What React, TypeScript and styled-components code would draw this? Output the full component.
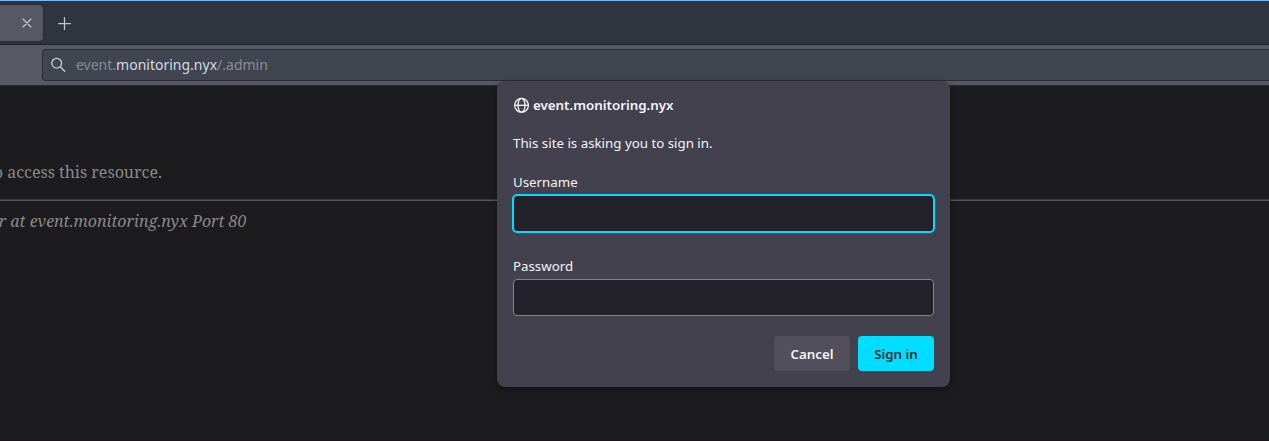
import React from "react";
import styled, { createGlobalStyle } from "styled-components";

const GlobalStyle = createGlobalStyle`
  * { box-sizing: border-box; }
  body { margin: 0; background: #1c1b1d; font-family: "Noto Sans", sans-serif; overflow: hidden; }
  button, input { font-family: inherit; }
`;

const Browser = styled.div`
  position: relative;
  width: 100%;
  height: 441px;
  overflow: hidden;
  display: flex;
  flex-direction: column;
`;

const TabBar = styled.div`
  flex: none;
  height: 45px;
  border-top: 1px solid #73bbf3;
  border-bottom: 1px solid #23252e;
  background: #30343f;
  display: flex;
  align-items: flex-start;
  padding-top: 4px;
`;

const Tab = styled.div`
  width: 43px;
  height: 36px;
  border-radius: 0 4px 4px 0;
  background: #565863;
  box-shadow: 0 0 2px rgba(15, 16, 22, 0.6);
  display: flex;
  align-items: center;
  justify-content: flex-end;
  padding-right: 11px;
`;

const NewTab = styled.div`
  width: 43px;
  height: 37px;
  display: flex;
  align-items: center;
  justify-content: center;
`;

const Toolbar = styled.div`
  flex: none;
  height: 41px;
  padding: 4px 0 4px 42px;
  background: #565863;
  border-bottom: 1px solid #292a33;
`;

const UrlBar = styled.div`
  height: 32px;
  border: 1px solid #2b2d38;
  border-right: 0;
  border-radius: 4px 0 0 4px;
  background: #404550;
  display: flex;
  align-items: center;
  padding: 0 0 1px 8px;
  gap: 10px;
`;

const Url = styled.span`
  color: #898c96;
  font-size: 14px;
  line-height: 20px;
  white-space: nowrap;
`;

const Domain = styled.span`
  color: #d3dae3;
`;

const Page = styled.main`
  flex: 1;
  background: #1c1b1d;
  color: #8b8989;
  border-bottom: 1px solid #1d151d;
  font-family: "Noto Serif", "DejaVu Serif", serif;
  font-size: 16px;
  line-height: 22px;
  padding-top: 75px;
`;

const Line = styled.div<{ $end: number; $italic?: boolean }>`
  width: ${(p) => p.$end}px;
  display: flex;
  justify-content: flex-end;
  white-space: nowrap;
  font-style: ${(p) => (p.$italic ? "italic" : "normal")};
`;

const Rule = styled.hr`
  height: 2px;
  margin: 16px 0 9px;
  border: 0;
  border-top: 1px solid #373638;
  background: #545355;
`;

const Dialog = styled.form`
  position: absolute;
  left: 497px;
  top: 81px;
  width: 453px;
  height: 306px;
  padding: 15px 16px 16px;
  border-radius: 8px;
  background: #43414d;
  color: #f4f4f7;
  box-shadow: 0 2px 6px rgba(0, 0, 0, 0.35);
  font-size: 13.33px;
  line-height: 18px;
  display: flex;
  flex-direction: column;
`;

const Origin = styled.div`
  display: flex;
  align-items: center;
  gap: 4px;
  height: 17px;
  font-weight: 600;
`;

const Message = styled.div`
  margin-top: 21px;
  font-size: 13.3px;
`;

const Field = styled.label<{ $gap: number }>`
  display: flex;
  flex-direction: column;
  margin-top: ${(p) => p.$gap}px;
  font-size: 13.3px;
`;

const Input = styled.input<{ $focused?: boolean }>`
  width: 421px;
  height: 37px;
  margin-top: 4px;
  border: 1px solid ${(p) => (p.$focused ? "#00ddff" : "#85838b")};
  box-shadow: ${(p) => (p.$focused ? "0 0 0 1px #00ddff" : "none")};
  border-radius: 4px;
  background: #23222b;
  color: #fbfbfe;
  outline: 0;
`;

const Actions = styled.div`
  display: flex;
  justify-content: flex-end;
  gap: 8px;
  margin-top: 20px;
`;

const Button = styled.button<{ $primary?: boolean }>`
  width: 76px;
  height: 35px;
  padding: 0;
  border: 0;
  border-radius: 4px;
  background: ${(p) => (p.$primary ? "#00ddff" : "#514f5a")};
  color: ${(p) => (p.$primary ? "#2b2a33" : "#f4f4f7")};
  font-size: 13.33px;
  font-weight: 600;
`;

const CloseIcon = () => (
  <svg width="10" height="10" viewBox="0 0 10 10" fill="none" stroke="#c5cad3" strokeWidth="1.1" strokeLinecap="round">
    <path d="M1 1l8 8M9 1l-8 8" />
  </svg>
);

const PlusIcon = () => (
  <svg width="13" height="13" viewBox="0 0 13 13" fill="none" stroke="#bfc5cf" strokeWidth="1.25" strokeLinecap="round">
    <path d="M6.5 .6v11.8M.6 6.5h11.8" />
  </svg>
);

const SearchIcon = () => (
  <svg width="15" height="15" viewBox="0 0 15 15" fill="none" stroke="#c9d0da" strokeWidth="1.3" strokeLinecap="round">
    <circle cx="5.7" cy="6.2" r="4.9" />
    <path d="M9.3 9.8l4.4 4.4" />
  </svg>
);

const GlobeIcon = () => (
  <svg width="16" height="16" viewBox="0 0 16 16" fill="none" stroke="#f4f4f7" strokeWidth="1.3">
    <circle cx="8.5" cy="8.3" r="6.9" />
    <ellipse cx="8.5" cy="8.3" rx="3.5" ry="6.9" />
    <path d="M1.6 8.3h13.8" />
  </svg>
);

export default function App() {
  return (
    <Browser>
      <GlobalStyle />
      <TabBar>
        <Tab><CloseIcon /></Tab>
        <NewTab><PlusIcon /></NewTab>
      </TabBar>
      <Toolbar>
        <UrlBar>
          <SearchIcon />
          <Url>event.<Domain>monitoring.nyx</Domain>/.admin</Url>
        </UrlBar>
      </Toolbar>
      <Page>
        <Line $end={162}>to access this resource.</Line>
        <Rule />
        <Line $end={246.5} $italic>Server at event.monitoring.nyx Port 80</Line>
      </Page>
      <Dialog>
        <Origin><GlobeIcon />event.monitoring.nyx</Origin>
        <Message>This site is asking you to sign in.</Message>
        <Field $gap={21}>Username<Input type="text" $focused /></Field>
        <Field $gap={25}>Password<Input type="password" /></Field>
        <Actions>
          <Button type="button">Cancel</Button>
          <Button type="button" $primary>Sign in</Button>
        </Actions>
      </Dialog>
    </Browser>
  );
}
